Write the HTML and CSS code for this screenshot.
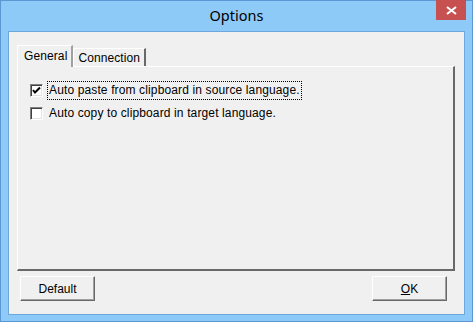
FILE: index.html
```html
<!DOCTYPE html>
<html>
  <head>
    <title>Options</title>
    <link rel="stylesheet" href="styles.css">
  </head>
  <body>
    <div class="window">
      <div class="titlebar">
        <span class="title">Options</span>
        <div class="close">
          <svg width="11" height="9" viewBox="0 0 11 9">
            <path d="M1 1 L10 8 M10 1 L1 8" stroke="#fff" stroke-width="2" fill="none"/>
          </svg>
        </div>
      </div>
      <div class="client">
        <div class="tabs">
          <div class="tab active">General</div>
          <div class="tab">Connection</div>
        </div>
        <div class="panel">
          <label class="check">
            <span class="box">
              <svg width="9" height="9" viewBox="0 0 9 9">
                <path d="M1 4 L3 6.5 L8 1.5" stroke="#000" stroke-width="2" fill="none"/>
              </svg>
            </span>
            <span class="text focus">Auto paste from clipboard in source language.</span>
          </label>
          <label class="check">
            <span class="box"></span>
            <span class="text">Auto copy to clipboard in target language.</span>
          </label>
        </div>
        <div class="buttons">
          <button class="btn">Default</button>
          <button class="btn"><u>O</u>K</button>
        </div>
      </div>
    </div>
  </body>
</html>
```
FILE: styles.css
```css
body {
  margin: 0;
  font-family: "Liberation Sans", Arial, sans-serif;
  font-size: 12px;
  color: #000;
}

.window {
  width: 473px;
  height: 322px;
  box-sizing: border-box;
  border: 1px solid #5d97d3;
  background-color: #8ecaf8;
  display: flex;
  flex-direction: column;
}

.titlebar {
  height: 29px;
  display: flex;
  align-items: center;
  justify-content: center;
  position: relative;
}

.title {
  font-family: "Noto Sans", "Liberation Sans", sans-serif;
  font-size: 14.5px;
  margin-top: -1px;
}

.close {
  position: absolute;
  top: -1px;
  right: 6px;
  width: 30px;
  height: 20px;
  background-color: #c75050;
  display: flex;
  align-items: center;
  justify-content: center;
}

.client {
  flex: 1;
  margin: 1px 7px 6px 7px;
  background-color: #f0f0f0;
  border: 1px solid #6ea6dd;
  padding: 13px 9px 0 8px;
  display: flex;
  flex-direction: column;
}

.tabs {
  display: flex;
  align-items: flex-end;
  height: 21px;
}

.tab {
  height: 18px;
  box-sizing: border-box;
  padding: 2px 4px 0 4px;
  border-top: 1px solid #fff;
  border-left: 1px solid #fff;
  border-right: 2px solid #696969;
  line-height: 14px;
  letter-spacing: 0.1px;
}

.tab.active {
  padding: 3px 4px 0 6px;
  border-right: 2px solid #a0a0a0;
  background-color: #f0f0f0;
  position: relative;
  z-index: 1;
  margin-bottom: -1px;
  height: 22px;
}

.panel {
  height: 205px;
  box-sizing: border-box;
  border-top: 1px solid #fff;
  border-left: 1px solid #fff;
  border-right: 2px solid #696969;
  border-bottom: 2px solid #696969;
  padding: 15px 0 0 12px;
  display: flex;
  flex-direction: column;
  gap: 6px;
}

.check {
  display: flex;
  align-items: center;
  gap: 4px;
  height: 17px;
}

.box {
  width: 13px;
  height: 13px;
  box-sizing: border-box;
  background-color: #fff;
  border-top: 1px solid #808080;
  border-left: 1px solid #808080;
  border-right: 1px solid #fff;
  border-bottom: 1px solid #fff;
  box-shadow: inset 1px 1px 0 #404040, inset -1px -1px 0 #e3e3e3;
  display: flex;
  align-items: center;
  justify-content: center;
}

.text {
  padding: 1px 1px 2px 1px;
  border: 1px solid transparent;
  letter-spacing: 0.13px;
}

.text.focus {
  border: 1px dotted #000;
}

.buttons {
  display: flex;
  justify-content: space-between;
  padding: 5px 8px 0 3px;
}

.btn {
  width: 75px;
  height: 25px;
  font-family: "Liberation Sans", Arial, sans-serif;
  font-size: 12px;
  background-color: #f0f0f0;
  border-top: 1px solid #fff;
  border-left: 1px solid #fff;
  border-right: 1px solid #696969;
  border-bottom: 1px solid #696969;
  box-shadow: inset -1px -1px 0 #a0a0a0;
  padding: 0;
}
```
